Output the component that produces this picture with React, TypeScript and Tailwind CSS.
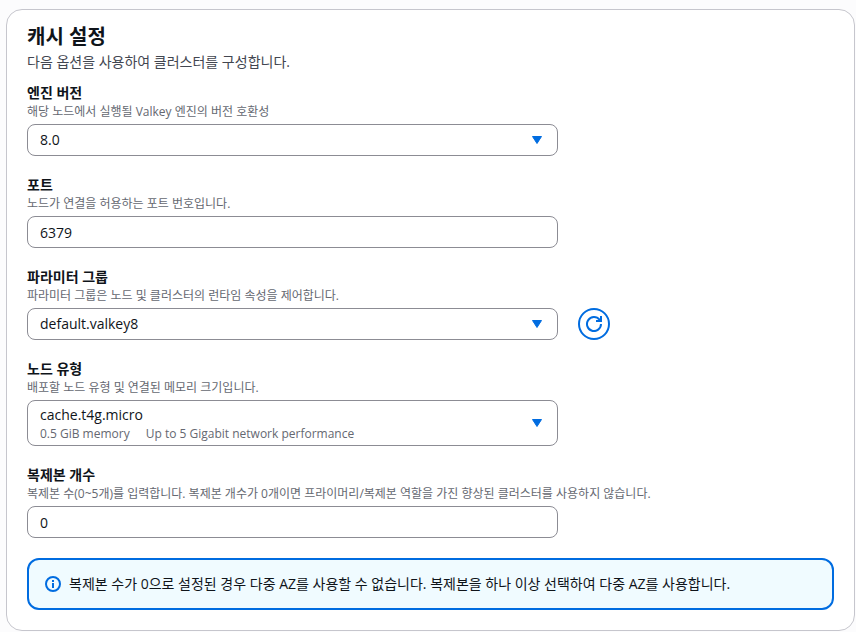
import { useState } from "react";
import type { ReactNode } from "react";

const control =
  "w-full rounded-lg border border-[#8c8c94] bg-white px-3 text-sm leading-5 text-[#0f141a]";

type FieldProps = {
  id: string;
  label: string;
  hint: string;
  action?: ReactNode;
  children: ReactNode;
};

const Field = ({ id, label, hint, action, children }: FieldProps) => (
  <div>
    <label htmlFor={id} className="mb-0.5 block text-sm leading-[18px] font-bold text-[#0f141a]">
      {label}
    </label>
    <p className="mb-1 text-xs leading-4 text-[#656871]">{hint}</p>
    <div className="flex items-center gap-5">
      <div className="relative w-2/3 max-w-[531px]">{children}</div>
      {action}
    </div>
  </div>
);

const Arrow = () => (
  <svg
    className="pointer-events-none absolute top-1/2 right-4 -translate-y-1/2"
    width="10"
    height="8"
    viewBox="0 0 10 8"
    aria-hidden="true"
  >
    <path d="M.5.5h9L5 7.5z" fill="#006ce0" stroke="#006ce0" strokeLinejoin="round" />
  </svg>
);

export default function App() {
  const [port, setPort] = useState("6379");
  const [replicas, setReplicas] = useState("0");

  return (
    <main className="min-h-screen bg-[#fcfcfd] pt-[9px] pr-px pl-1.5 font-['Open_Sans','Noto_Sans_CJK_KR',sans-serif]">
      <section className="rounded-2xl border border-[#c6c6cd] bg-white px-5 pt-3.5 pb-5">
        <h2 className="mb-0.5 text-xl leading-[26px] font-bold text-[#0f141a]">캐시 설정</h2>
        <p className="text-sm leading-5 text-[#424650]">다음 옵션을 사용하여 클러스터를 구성합니다.</p>
        <form className="mt-3 flex flex-col gap-5">
          <Field id="engine" label="엔진 버전" hint="해당 노드에서 실행될 Valkey 엔진의 버전 호환성">
            <select id="engine" className={`${control} block h-8 appearance-none`}>
              <option>8.0</option>
            </select>
            <Arrow />
          </Field>
          <Field id="port" label="포트" hint="노드가 연결을 허용하는 포트 번호입니다.">
            <input id="port" className={`${control} block h-8`} value={port} onChange={(e) => setPort(e.target.value)} />
          </Field>
          <Field
            id="group"
            label="파라미터 그룹"
            hint="파라미터 그룹은 노드 및 클러스터의 런타임 속성을 제어합니다."
            action={
              <button
                type="button"
                aria-label="새로 고침"
                className="flex size-8 items-center justify-center rounded-full border-2 border-[#006ce0] text-[#006ce0]"
              >
                <svg width="16" height="16" viewBox="0 0 16 16" fill="none" stroke="currentColor" strokeWidth="2">
                  <path d="M10 5h5V0" />
                  <path d="M15 8a7 7 0 1 1-1.5-4.3L15 5" />
                </svg>
              </button>
            }
          >
            <select id="group" className={`${control} block h-8 appearance-none`}>
              <option>default.valkey8</option>
            </select>
            <Arrow />
          </Field>
          <Field id="node" label="노드 유형" hint="배포할 노드 유형 및 연결된 메모리 크기입니다.">
            <select id="node" className={`${control} block h-[46px] appearance-none pb-4`}>
              <option>cache.t4g.micro</option>
            </select>
            <div className="pointer-events-none absolute bottom-1 left-[13px] flex gap-4 text-xs leading-4 text-[#656871]">
              <span>0.5 GiB memory</span>
              <span>Up to 5 Gigabit network performance</span>
            </div>
            <Arrow />
          </Field>
          <Field
            id="replicas"
            label="복제본 개수"
            hint="복제본 수(0~5개)를 입력합니다. 복제본 개수가 0개이면 프라이머리/복제본 역할을 가진 향상된 클러스터를 사용하지 않습니다."
          >
            <input
              id="replicas"
              className={`${control} block h-8`}
              value={replicas}
              onChange={(e) => setReplicas(e.target.value)}
            />
          </Field>
        </form>
        <div className="mt-5 flex items-center gap-2 rounded-xl border-2 border-[#006ce0] bg-[#f0fbff] px-4 py-3.5 text-sm leading-5 text-[#0f141a]">
          <svg width="16" height="16" viewBox="0 0 16 16" fill="none" stroke="#006ce0" strokeWidth="2" aria-hidden="true">
            <circle cx="8" cy="8" r="7" />
            <path d="M8 12V7M8 6V4" />
          </svg>
          <p>복제본 수가 0으로 설정된 경우 다중 AZ를 사용할 수 없습니다. 복제본을 하나 이상 선택하여 다중 AZ를 사용합니다.</p>
        </div>
      </section>
    </main>
  );
}
